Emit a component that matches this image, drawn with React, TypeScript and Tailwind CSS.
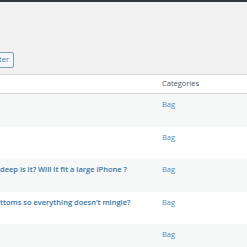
export default function App() {
  const rows = [
    { title: '', cat: 'Bag' },
    { title: '', cat: 'Bag' },
    { title: 'deep is it? Will it fit a large iPhone ?', cat: 'Bag' },
    { title: 'ttoms so everything doesn\u2019t mingle?', cat: 'Bag' },
    { title: '', cat: 'Bag' },
  ]

  return (
    <div className="min-h-screen w-[247px] overflow-hidden bg-[#f1f1f1] font-['Open_Sans',sans-serif]">
      {/* admin bar edge */}
      <div className="h-[2px] bg-[#32373c]" />

      {/* filter bar */}
      <div className="h-[72px] flex items-end pb-[6px]">
        <div className="w-[14px] flex justify-end">
          <button className="shrink-0 h-[16px] px-[4px] rounded-[2px] border border-[#7e9fb8] bg-[#f3f5f6] text-[7.5px] leading-none text-[#4f7fa3]">
            Filter
          </button>
        </div>
      </div>

      {/* table */}
      <div className="border-t border-[#dcdcde] bg-white">
        <div className="h-[19px] flex items-center border-b border-[#d5d5d5] text-[7.5px] text-[#50575e]">
          <div className="w-[162px]" />
          <div>Categories</div>
        </div>
        {rows.map((r, i) => (
          <div
            key={i}
            className={`h-[32.5px] flex pt-[5px] text-[7.5px] leading-[10px] ${i % 2 === 0 ? 'bg-[#f6f7f7]' : 'bg-white'}`}
          >
            <div className="w-[162px] shrink-0 font-semibold text-[#3677a6] whitespace-nowrap">{r.title}</div>
            <div className="text-[#4b8fc0]">{r.cat}</div>
          </div>
        ))}
      </div>
    </div>
  )
}
